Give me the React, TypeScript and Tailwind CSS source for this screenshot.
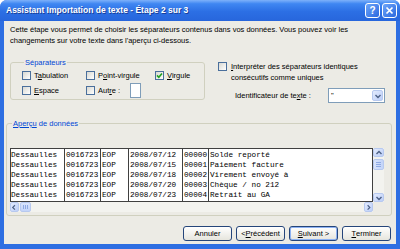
import React from "react";

const rows = [
  ["Dessaulles", "0016723", "EOP", "2008/07/12", "00000", "Solde reporté"],
  ["Dessaulles", "0016723", "EOP", "2008/07/15", "00001", "Paiement facture"],
  ["Dessaulles", "0016723", "EOP", "2008/07/18", "00002", "Virement envoyé à"],
  ["Dessaulles", "0016723", "EOP", "2008/07/20", "00003", "Chèque / no 212"],
  ["Dessaulles", "0016723", "EOP", "2008/07/23", "00004", "Retrait au GA"],
];

const colWidths = ["w-[54px]", "w-[36px] pl-[1px]", "w-[28px] pl-[1px]", "w-[54px] pl-[1px]", "w-[26px] pl-[1px]", "flex-1 pl-[1px]"];

function Box({ checked }: { checked?: boolean }) {
  return (
    <span className="flex h-[9px] w-[9px] shrink-0 items-center justify-center border border-[#4a6f9c] bg-gradient-to-br from-[#d8d8d2] to-white">
      {checked && (
        <svg width="7" height="7" viewBox="0 0 7 7">
          <path d="M1 3.4 L2.8 5.3 L6 1.4" stroke="#21a121" strokeWidth="1.6" fill="none" />
        </svg>
      )}
    </span>
  );
}

function Check({ label, checked }: { label: React.ReactNode; checked?: boolean }) {
  return (
    <div className="flex h-[13px] items-center gap-[3px]">
      <Box checked={checked} />
      <span className="whitespace-nowrap">{label}</span>
    </div>
  );
}

function Arrow({ dir }: { dir: "up" | "down" | "left" | "right" }) {
  const d = {
    up: "M1.5 4.5 L4 2 L6.5 4.5",
    down: "M1.5 2.5 L4 5 L6.5 2.5",
    left: "M4.5 1.5 L2 4 L4.5 6.5",
    right: "M3 1.5 L5.5 4 L3 6.5",
  }[dir];
  return (
    <svg width="8" height="8" viewBox="0 0 8 7">
      <path d={d} stroke="#4d6185" strokeWidth="1.4" fill="none" />
    </svg>
  );
}

function ScrollBtn({ dir, className = "" }: { dir: "up" | "down" | "left" | "right"; className?: string }) {
  return (
    <span
      className={`flex shrink-0 items-center justify-center rounded-[2px] border border-[#b7c9ef] bg-gradient-to-br from-[#e3ebfd] to-[#bccef8] ${className}`}
    >
      <Arrow dir={dir} />
    </span>
  );
}

function Btn({ children, def }: { children: React.ReactNode; def?: boolean }) {
  return (
    <button
      className={`flex h-[15px] w-[49px] items-center justify-center rounded-[3px] border border-[#25457a] bg-gradient-to-b from-white to-[#e6e5dd] text-[7.5px] text-black ${
        def ? "shadow-[inset_0_0_0_1px_#8db2f3]" : ""
      }`}
    >
      {children}
    </button>
  );
}

export default function App() {
  return (
    <div className="flex h-[249px] w-[400px] flex-col overflow-hidden rounded-t-[7px] bg-[#2d6ee2] font-['Liberation_Sans',Arial,sans-serif] text-[7.5px] text-black">
      {/* title bar */}
      <div className="flex h-[21px] shrink-0 items-center bg-[linear-gradient(to_bottom,#7eb1fa_0%,#3f87f2_18%,#2c6fe4_55%,#2766dc_100%)] pl-[6px] pr-[3px]">
        <span className="flex-1 whitespace-nowrap text-[8.5px] font-bold text-white [text-shadow:1px_1px_0_#1a3f9a]">
          Assistant Importation de texte - Étape 2 sur 3
        </span>
        <div className="flex gap-[2px]">
          <span className="flex h-[15px] w-[15px] items-center justify-center rounded-[3px] border border-white bg-gradient-to-br from-[#6ea5f8] to-[#2a67df] text-[10px] font-bold text-white">
            ?
          </span>
          <span className="flex h-[15px] w-[15px] items-center justify-center rounded-[3px] border border-white bg-gradient-to-br from-[#6ea5f8] to-[#2a67df]">
            <svg width="9" height="9" viewBox="0 0 9 9">
              <path d="M1.5 1.5 L7.5 7.5 M7.5 1.5 L1.5 7.5" stroke="white" strokeWidth="1.7" />
            </svg>
          </span>
        </div>
      </div>

      {/* body */}
      <div className="flex flex-1 px-[4px] pb-[5px]">
        <div className="flex flex-1 flex-col bg-[#ecebe5]">
          <p className="pl-[6px] pt-[3px] leading-[11px]">
            Cette étape vous permet de choisir les séparateurs contenus dans vos données. Vous pouvez voir les
            <br />
            changements sur votre texte dans l'aperçu ci-dessous.
          </p>

          <div className="mt-[11px] flex items-start">
            <fieldset className="ml-[6px] w-[195px] rounded-[3px] border border-[#d0d0bf] pb-[2px] pl-[11px]">
              <legend className="ml-[2px] px-[1px] leading-[11px] text-[#0046d5]">Séparateurs</legend>
              <div className="grid grid-cols-[64px_69px_auto] gap-y-[2px] pt-[1px]">
                <Check label={<>T<u>a</u>bulation</>} />
                <Check label={<>P<u>o</u>int-virgule</>} />
                <Check label={<><u>V</u>irgule</>} checked />
                <Check label={<><u>E</u>space</>} />
                <div className="col-span-2 flex h-[13px] items-center gap-[3px]">
                  <Box />
                  <span className="whitespace-nowrap">
                    Aut<u>r</u>e :
                  </span>
                  <span className="ml-[7px] h-[15px] w-[11px] border border-[#7f9db9] bg-white" />
                </div>
              </div>
            </fieldset>

            <div className="ml-[13px] flex flex-col pt-[4px]">
              <div className="flex items-start gap-[4px]">
                <span className="mt-[1px]">
                  <Box />
                </span>
                <span className="leading-[11px]">
                  <u>I</u>nterpréter des séparateurs identiques
                  <br />
                  consécutifs comme uniques
                </span>
              </div>
              <div className="mt-[5px] flex h-[15px] items-center pl-[17px]">
                <span className="w-[93px] whitespace-nowrap">
                  Identificateur de te<u>x</u>te :
                </span>
                <div className="flex h-[15px] w-[57px] items-center border border-[#7f9db9] bg-white pl-[2px]">
                  <span className="flex-1">"</span>
                  <ScrollBtn dir="down" className="mr-[1px] h-[11px] w-[11px]" />
                </div>
              </div>
            </div>
          </div>

          <fieldset className="ml-[2px] mt-[15px] w-[386px] rounded-[3px] border border-[#d0d0bf] pb-[3px] pl-[3px] pt-[19px]">
            <legend className="ml-[2px] px-[1px] leading-[11px] text-[#0046d5]">
              <u>Aperçu</u> de données
            </legend>
            <div className="flex w-[374px] flex-col">
              <div className="flex h-[54px]">
                <div className="flex flex-1 overflow-hidden border border-[#404040] bg-white pt-[1px] font-['Liberation_Mono',monospace] text-[7.7px] leading-[10px]">
                  {colWidths.map((w, ci) => (
                    <div key={ci} className={`${w} ${ci < 5 ? "border-r border-[#404040]" : ""} -mt-[1px] shrink-0 pt-[1px]`}>
                      {rows.map((r, ri) => (
                        <div key={ri} className="h-[10px] whitespace-nowrap">
                          {r[ci]}
                        </div>
                      ))}
                    </div>
                  ))}
                </div>
                <div className="flex w-[11px] flex-col bg-[#f3f3ef]">
                  <ScrollBtn dir="up" className="h-[9px] w-[11px]" />
                  <span className="mt-[2px] flex h-[11px] w-[11px] flex-col items-center justify-center gap-[1px] rounded-[2px] border border-[#b7c9ef] bg-gradient-to-r from-[#d9e4fc] to-[#c3d4f9]">
                    <span className="h-px w-[5px] bg-[#8faae4]" />
                    <span className="h-px w-[5px] bg-[#8faae4]" />
                    <span className="h-px w-[5px] bg-[#8faae4]" />
                  </span>
                  <span className="flex-1" />
                  <ScrollBtn dir="down" className="h-[9px] w-[11px]" />
                </div>
              </div>
              <div className="flex h-[10px]">
                <div className="flex flex-1 bg-[#f3f3ef]">
                  <ScrollBtn dir="left" className="h-[10px] w-[9px]" />
                  <span className="ml-[1px] flex h-[10px] w-[11px] items-center justify-center gap-[1px] rounded-[2px] border border-[#b7c9ef] bg-gradient-to-b from-[#d9e4fc] to-[#c3d4f9]">
                    <span className="h-[4px] w-px bg-[#8faae4]" />
                    <span className="h-[4px] w-px bg-[#8faae4]" />
                    <span className="h-[4px] w-px bg-[#8faae4]" />
                  </span>
                  <span className="flex-1" />
                  <ScrollBtn dir="right" className="h-[10px] w-[9px]" />
                </div>
                <div className="w-[11px]" />
              </div>
            </div>
          </fieldset>

          <div className="mt-[10px] flex justify-end gap-[4px] pr-[5px]">
            <Btn>Annuler</Btn>
            <Btn>
              &lt; <u>P</u>récédent
            </Btn>
            <Btn def>
              <u>S</u>uivant &gt;
            </Btn>
            <Btn>
              <u>T</u>erminer
            </Btn>
          </div>
        </div>
      </div>
    </div>
  );
}
